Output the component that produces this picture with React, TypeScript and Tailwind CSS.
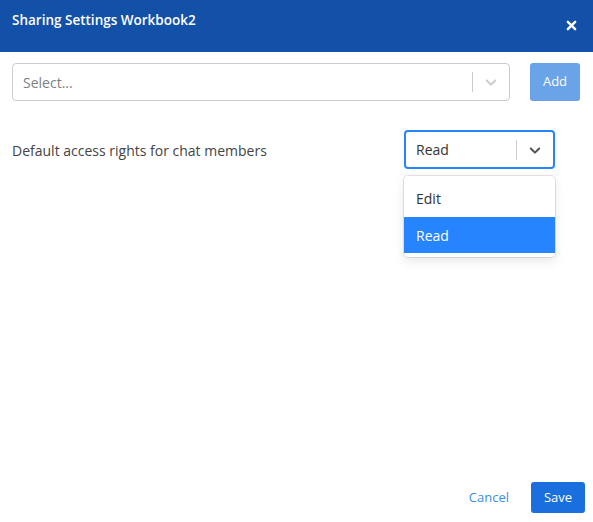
import React from 'react';

const Chevron: React.FC<{ className?: string }> = ({ className }) => (
  <svg viewBox="0 0 20 20" className={className} fill="currentColor">
    <path d="M4.516 7.548c0.436-0.446 1.043-0.481 1.576 0l3.908 3.747 3.908-3.747c0.533-0.481 1.141-0.446 1.574 0 0.436 0.445 0.408 1.197 0 1.615-0.406 0.418-4.695 4.502-4.695 4.502-0.217 0.223-0.502 0.335-0.787 0.335s-0.57-0.112-0.789-0.335c0 0-4.287-4.084-4.695-4.502s-0.436-1.170 0-1.615z" />
  </svg>
);

const App: React.FC = () => {
  return (
    <div className="w-[593px] h-[522px] bg-white flex flex-col font-['Open_Sans',sans-serif] overflow-hidden">
      <div className="h-[52px] bg-[#1351a8] flex items-start justify-between pl-3 pr-4 shrink-0">
        <h1 className="text-white text-[13.5px] font-semibold mt-[10px] leading-[20px]">Sharing Settings Workbook2</h1>
        <svg viewBox="0 0 12 12" className="w-[11px] h-[11px] mt-[20px]" stroke="white" strokeWidth="2.6" strokeLinecap="round">
          <path d="M2 2 L10 10 M10 2 L2 10" />
        </svg>
      </div>

      <div className="flex-1 flex flex-col px-3">
        <div className="flex items-center mt-[11px] gap-[20px]">
          <div className="w-[498px] h-[38px] border border-[#cccccc] rounded-[4px] flex items-center">
            <span className="flex-1 pl-[10px] text-[14px] text-[#808080]">Select...</span>
            <span className="w-px h-[20px] bg-[#cccccc]" />
            <div className="w-[36px] flex justify-center text-[#cccccc]">
              <Chevron className="w-[18px] h-[18px]" />
            </div>
          </div>
          <button className="w-[50px] h-[38px] rounded-[3px] bg-[#6aa3e8] text-white text-[13px]">Add</button>
        </div>

        <div className="flex items-start justify-between mt-[29px] pr-[26px]">
          <span className="text-[14px] text-[#444444] mt-[10px]">Default access rights for chat members</span>
          <div className="relative w-[151px]">
            <div className="h-[39px] border-2 border-[#2684ff] rounded-[4px] flex items-center">
              <span className="flex-1 pl-[10px] text-[14px] text-[#333333]">Read</span>
              <span className="w-px h-[20px] bg-[#cccccc]" />
              <div className="w-[36px] flex justify-center text-[#555555]">
                <Chevron className="w-[18px] h-[18px]" />
              </div>
            </div>
            <div className="absolute top-[46px] left-0 w-[151px] bg-white rounded-[4px] py-[4px] shadow-[0_0_0_1px_rgba(0,0,0,0.1),0_4px_11px_rgba(0,0,0,0.1)]">
              <div className="h-[37px] flex items-center pl-[12px] text-[14px] text-[#333333]">Edit</div>
              <div className="h-[36px] flex items-center pl-[12px] text-[14px] text-white bg-[#2684ff]">Read</div>
            </div>
          </div>
        </div>

        <div className="mt-auto mb-[9px] flex items-center justify-end gap-[22px] mr-[-4px]">
          <button className="text-[13px] text-[#3a8ee6]">Cancel</button>
          <button className="w-[54px] h-[31px] rounded-[3px] bg-[#1a6fdf] text-white text-[13px]">Save</button>
        </div>
      </div>
    </div>
  );
};

export default App;
